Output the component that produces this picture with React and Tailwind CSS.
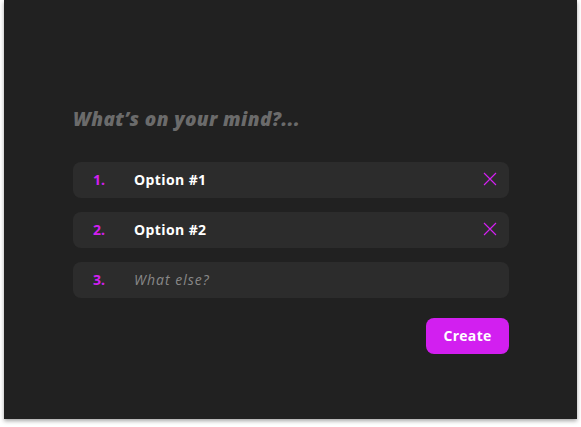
import React from "react";

function XIcon() {
  return (
    <svg width="14" height="14" viewBox="0 0 14 14" fill="none">
      <path d="M1 1L13 13M13 1L1 13" stroke="#d21ff0" strokeWidth="1.2" />
    </svg>
  );
}

export default function App() {
  const font = { fontFamily: '"Open Sans", "Noto Sans", sans-serif' };
  return (
    <div className="w-[581px] h-[427px] bg-white" style={font}>
      <div className="ml-[4px] w-[573px] h-[419px] bg-[#212121] shadow-[0_2px_4px_rgba(0,0,0,0.35)] pl-[69px] pt-[105px]">
        <div className="w-[436px] flex flex-col">
          <div className="h-[28px] text-[19px] leading-[28px] font-extrabold italic text-[#6b6b6b] tracking-[0.4px]">
            What’s on your mind?...
          </div>
          <div className="mt-[29px] flex flex-col gap-[14px]">
            <div className="h-[36px] rounded-lg bg-[#2c2c2c] flex items-center pl-[20px] pr-[12px] pb-[2px]">
              <span className="w-[41px] text-[14px] font-bold text-[#d21ff0]">1.</span>
              <span className="flex-1 text-[14px] font-bold text-white tracking-[0.4px]">Option #1</span>
              <XIcon />
            </div>
            <div className="h-[36px] rounded-lg bg-[#2c2c2c] flex items-center pl-[20px] pr-[12px] pb-[2px]">
              <span className="w-[41px] text-[14px] font-bold text-[#d21ff0]">2.</span>
              <span className="flex-1 text-[14px] font-bold text-white tracking-[0.4px]">Option #2</span>
              <XIcon />
            </div>
            <div className="h-[36px] rounded-lg bg-[#2c2c2c] flex items-center pl-[20px] pr-[12px] pb-[2px]">
              <span className="w-[41px] text-[14px] font-bold text-[#d21ff0]">3.</span>
              <span className="flex-1 text-[14px] italic text-[#888888] tracking-[1px]">What else?</span>
            </div>
          </div>
          <div className="mt-[20px] flex justify-end">
            <button className="w-[83px] h-[36px] rounded-lg bg-[#d21ff0] text-white text-[14px] font-bold tracking-[0.3px] pb-[2px]">
              Create
            </button>
          </div>
        </div>
      </div>
    </div>
  );
}
